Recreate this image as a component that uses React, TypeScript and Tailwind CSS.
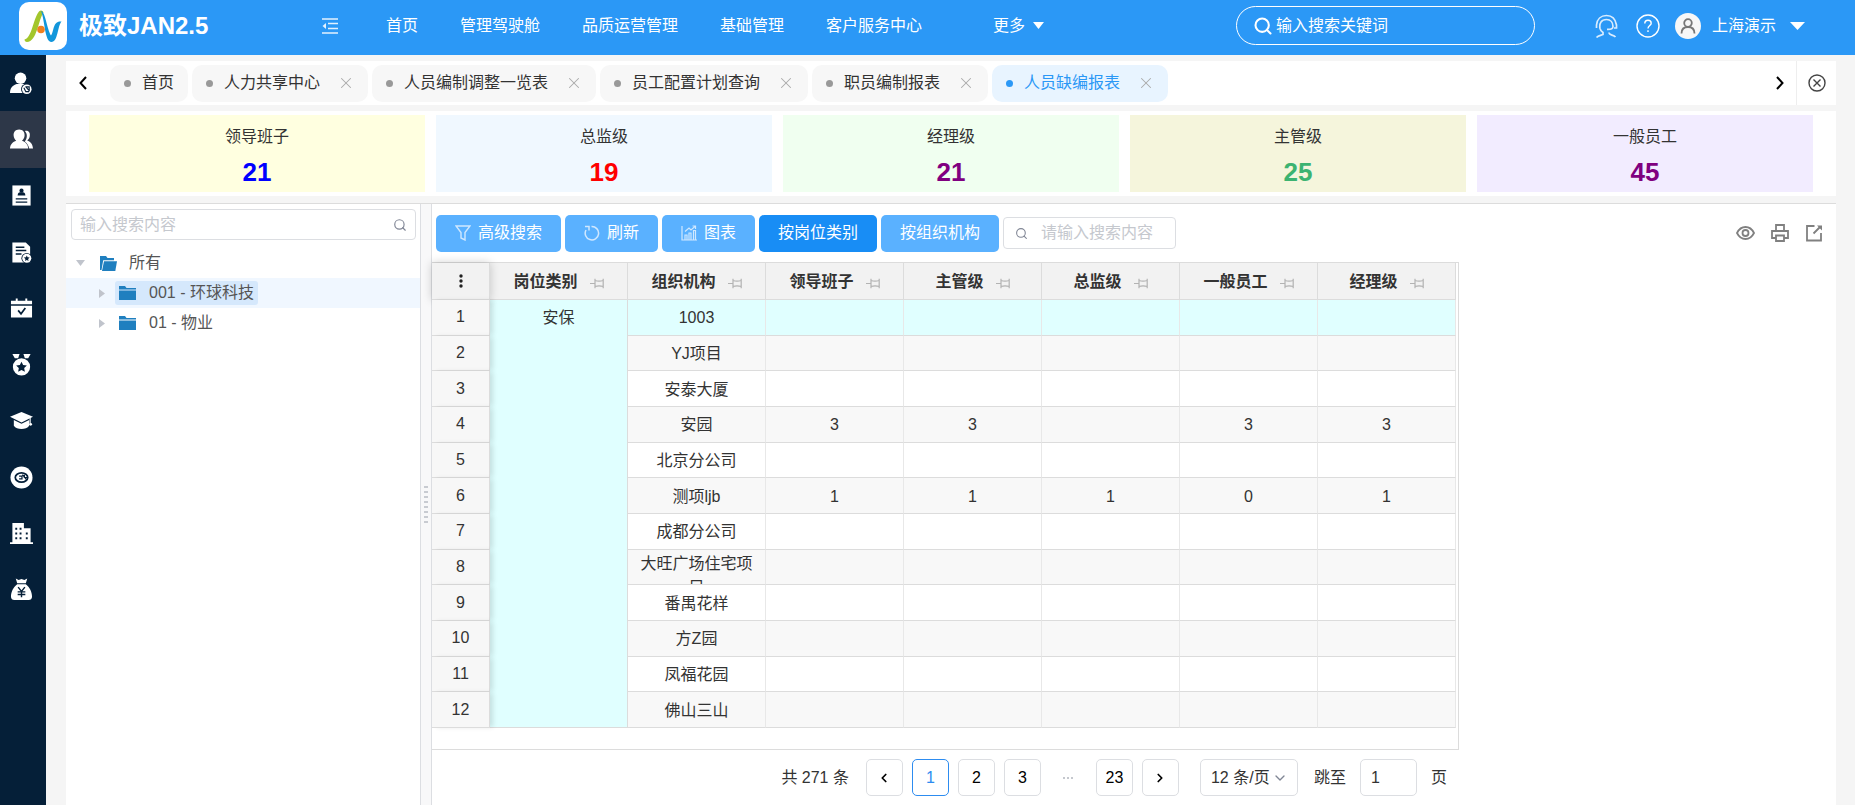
import type { ReactNode } from "react";
import clsx from "clsx";
import { ChevronDown, ChevronLeft, ChevronRight, Search, X } from "lucide-react";

const navItems = ["首页", "管理驾驶舱", "品质运营管理", "基础管理", "客户服务中心"];

const tabs = [
  { title: "首页", closable: false },
  { title: "人力共享中心", closable: true },
  { title: "人员编制调整一览表", closable: true },
  { title: "员工配置计划查询", closable: true },
  { title: "职员编制报表", closable: true },
  { title: "人员缺编报表", closable: true, active: true },
];

const summary = [
  { label: "领导班子", value: 21, bg: "bg-[#ffffe0]", color: "text-[#0000ff]" },
  { label: "总监级", value: 19, bg: "bg-[#f0f8ff]", color: "text-[#ff0000]" },
  { label: "经理级", value: 21, bg: "bg-[#f0fff0]", color: "text-[#800080]" },
  { label: "主管级", value: 25, bg: "bg-[#f5f5dc]", color: "text-[#3cb371]" },
  { label: "一般员工", value: 45, bg: "bg-[#f2ecff]", color: "text-[#800080]" },
];

const columns = ["岗位类别", "组织机构", "领导班子", "主管级", "总监级", "一般员工", "经理级"];

const rows: { org: string; values: string[] }[] = [
  { org: "1003", values: ["", "", "", "", ""] },
  { org: "YJ项目", values: ["", "", "", "", ""] },
  { org: "安泰大厦", values: ["", "", "", "", ""] },
  { org: "安园", values: ["3", "3", "", "3", "3"] },
  { org: "北京分公司", values: ["", "", "", "", ""] },
  { org: "测项ljb", values: ["1", "1", "1", "0", "1"] },
  { org: "成都分公司", values: ["", "", "", "", ""] },
  { org: "大旺广场住宅项目", values: ["", "", "", "", ""] },
  { org: "番禺花样", values: ["", "", "", "", ""] },
  { org: "方Z园", values: ["", "", "", "", ""] },
  { org: "凤福花园", values: ["", "", "", "", ""] },
  { org: "佛山三山", values: ["", "", "", "", ""] },
];

const dark = "#051f38";

const sideMenu: { name: string; icon: ReactNode }[] = [
  {
    name: "员工",
    icon: (
      <>
        <ellipse cx="11" cy="6.5" rx="6" ry="6" />
        <path d="M0 22c0-6 3-8 7-9.500h8l3 1.500v8z" />
        <circle cx="17.500" cy="18" r="6" fill={dark} />
        <circle cx="17.500" cy="18" r="5" />
        <path d="M14.500 16.500l2 4h3.500M16 15.500h4v4M17 16l3.500 4" stroke={dark} strokeWidth="1.200" fill="none" />
      </>
    ),
  },
  {
    name: "人员",
    icon: (
      <>
        <path d="M15.500 3c4-1 6 2 5 6-.4 2-1.500 3-2.500 4 3 1.200 5.500 3 6 8.500h-4c-.5-3-2-5.500-4.500-7.500 2.500-3.500 3-8 0-11z" />
        <path d="M9.500 1.500c4 0 6 3 5.700 6.500-.2 2.200-1.200 4-2.700 5.200 3.500 1.300 6.200 3.300 6.500 8.300H0c.3-5 3-7 6.500-8.300C5 12 4 10.200 3.800 8 3.500 4.500 5.500 1.500 9.500 1.500z" />
      </>
    ),
  },
  {
    name: "档案",
    icon: (
      <>
        <path d="M2.500 1.500h19v21h-19z" />
        <circle cx="12" cy="7" r="2.200" fill={dark} />
        <path d="M8 12c0-3 1.500-3.500 4-3.500s4 .5 4 3.500z" fill={dark} />
        <path d="M6 15.500h12M6 19h12" stroke={dark} strokeWidth="1.300" />
      </>
    ),
  },
  {
    name: "合同",
    icon: (
      <>
        <path d="M2.500 1.500h14l4.500 4.500v16.500H2.500z" />
        <path d="M6 6.500h9M6 10h11M6 13.500h6" stroke={dark} strokeWidth="1.600" />
        <circle cx="17.500" cy="18" r="5.600" fill={dark} />
        <circle cx="17.500" cy="18" r="4.700" />
        <path d="M17.500 15l.9 2 2.100.2-1.600 1.500.5 2.100-1.900-1.100-1.900 1.100.5-2.100-1.600-1.500 2.100-.2z" fill={dark} />
      </>
    ),
  },
  {
    name: "考勤",
    icon: (
      <>
        <path d="M1 4h5V1.500h2V4h8V1.500h2V4h5v3.500H1zM1 9h22v12.500H1z" />
        <path d="M8.500 14l3 3.500 4.500-6" stroke={dark} strokeWidth="1.800" fill="none" />
      </>
    ),
  },
  {
    name: "绩效",
    icon: (
      <>
        <path d="M2.500 1h7.500l-1.500 4.500H5zM14 1h7.500L19 5.500h-3.500z" />
        <circle cx="12" cy="14.500" r="9" />
        <path d="M12 9l1.700 3.500 3.900.5-2.800 2.700.7 3.900L12 17.800l-3.500 1.800.7-3.900L6.400 13l3.900-.5z" fill={dark} />
      </>
    ),
  },
  {
    name: "培训",
    icon: (
      <>
        <path d="M12 3l12 5-12 6L0 8z" />
        <path d="M4 11.500l8 4 8-4v6c-3 4.500-13 4.500-16 0z" />
        <path d="M21 9v6" stroke="#fff" strokeWidth="1.200" />
        <circle cx="21.500" cy="16" r="1.500" />
      </>
    ),
  },
  {
    name: "共享",
    icon: (
      <>
        <circle cx="12" cy="12" r="11.500" />
        <ellipse cx="12" cy="12" rx="6.500" ry="4.800" fill="none" stroke={dark} strokeWidth="1.800" />
        <path d="M9.500 10.500h3v3h-3M13 9l4 5M15 9v3h3" stroke={dark} strokeWidth="1.300" fill="none" />
      </>
    ),
  },
  {
    name: "组织",
    icon: (
      <>
        <path d="M2.500 1h12v5.500h7V21H24v2H0v-2h2.500z" />
        <path
          d="M5.500 6h2v2h-2zM10 6h2v2h-2zM5.500 11h2v2h-2zM10 11h2v2h-2zM16.500 11h2v2h-2zM5.500 16h2v2h-2zM10 16h2v2h-2zM16.500 16h2v2h-2z"
          fill={dark}
        />
      </>
    ),
  },
  {
    name: "薪酬",
    icon: (
      <>
        <path d="M6 .5l3 1.500 3-1 3 1 3-1.500-1.500 5h-9zM7.500 6.500h9c4 3 6.500 8 6.500 13 0 2-1.500 3.500-3.500 3.500h-15C2.500 23 1 21.500 1 19.500c0-5 2.500-10 6.500-13z" />
        <path d="M8.500 9.500l3.500 4.500 3.500-4.500M12 14v6M8 14.500h8M8 17.300h8" stroke={dark} strokeWidth="1.500" fill="none" />
      </>
    ),
  },
];

function Logo() {
  return (
    <span className="flex size-12 items-center justify-center rounded-[10px] bg-white">
      <svg width="40" height="40" viewBox="0 0 40 40">
        <path d="M1.500 33.500C9 32 10 13 16 5.500c1.500-1.800 4-1 4.500 1C15.500 13 14 36 4 36c-1.500 0-2.500-1-2.500-2.500z" fill="#a3c62c" />
        <path d="M18 5c4.500 1 6 18 10 24.500C31 26 29.500 14.500 38.500 15.500 34.500 20 35 36 28.500 36 21.500 36 22 14 18 5z" fill="#1296db" />
        <circle cx="18" cy="23.500" r="3.800" fill="#f08020" />
      </svg>
    </span>
  );
}

function Pin() {
  return (
    <svg width="14" height="11" viewBox="0 0 14 11" fill="none" stroke="#b3b3b3" strokeWidth="1.200">
      <path d="M0 5.500h5M5 .8v9.400M13.200.8v9.400M5 2.500c3 1 5 1 8.200 0M5 8.500c3-1 5-1 8.200 0" />
    </svg>
  );
}

function Folder({ open }: { open?: boolean }) {
  return (
    <svg width="17" height="15" viewBox="0 0 17 15" fill="#1f7fbf">
      {open ? (
        <>
          <path d="M0 0h6l1.500 2H14v2.200H3.200L1.500 14H0z" />
          <path d="M4 5.200h13L15.300 15H2z" />
        </>
      ) : (
        <>
          <path d="M0 0h6l1.500 2H17v1.500H0z" />
          <path d="M0 4.500h17V14H0z" />
        </>
      )}
    </svg>
  );
}

function ToolButton({ icon, active, children }: { icon?: ReactNode; active?: boolean; children: ReactNode }) {
  return (
    <button
      className={clsx(
        "flex h-[37px] items-center gap-[7px] rounded-[5px] px-[19px] text-white",
        active ? "bg-[#188df5]" : "bg-[#5ab1ff]"
      )}
    >
      {icon}
      {children}
    </button>
  );
}

function PageButton({ active, label, children }: { active?: boolean; label?: string; children: ReactNode }) {
  return (
    <button
      aria-label={label}
      className={clsx(
        "flex h-[37px] w-[37px] items-center justify-center rounded-[5px] border bg-white",
        active ? "border-[#2d8cf0] text-[#2d8cf0]" : "border-[#dcdee2] text-black"
      )}
    >
      {children}
    </button>
  );
}

function TopBar() {
  return (
    <header className="flex h-[55px] items-center bg-[#2b98f6] pr-[50px] pb-1 pl-[19px] text-white">
      <div className="flex w-[303px] items-center gap-3">
        <Logo />
        <h1 className="text-2xl font-bold">极致JAN2.5</h1>
      </div>
      <button aria-label="收起菜单">
        <svg width="16" height="16" viewBox="0 0 16 16" stroke="#e3f1fe" strokeWidth="1.400" fill="#e3f1fe">
          <path d="M0 1h16M6 5.500h10M6 10.500h10M0 15h16" fill="none" />
          <path d="M4 5v6L.5 8z" stroke="none" />
        </svg>
      </button>
      <nav className="ml-12 flex gap-[42px] whitespace-nowrap">
        {navItems.map((item) => (
          <a key={item} href="#">
            {item}
          </a>
        ))}
      </nav>
      <button className="ml-[71px] flex items-center gap-2 whitespace-nowrap">
        更多
        <svg width="11" height="7" viewBox="0 0 11 7" fill="currentColor">
          <path d="M0 0h11L5.500 7z" />
        </svg>
      </button>
      <label className="ml-auto flex h-[39px] w-[299px] items-center gap-[3px] rounded-full border border-white pl-4">
        <Search size={20} strokeWidth={2.5} />
        <input
          aria-label="搜索"
          placeholder="输入搜索关键词"
          className="min-w-0 flex-1 bg-transparent outline-none placeholder:text-white"
        />
      </label>
      <div className="ml-[60px] flex items-center">
        <button aria-label="客服">
          <svg width="24" height="24" viewBox="0 0 24 24" fill="none" stroke="#d9ecfe" strokeWidth="1.700">
            <path d="M1.500 14V11C2 5 6 1.500 11.500 1.500S20.500 5 21.500 11v3h-2.500" />
            <path d="M5 14.500C4 9 6.500 5.500 11.500 5.500c4 0 6.500 3 6.500 7 0 2-1.500 3-6 2.800M5 14.500c.5 2 1.500 3 3 4v2c-2 .8-5 1-6.500 3M14 18.500c0 3 4.500 2 6.500 4.500" />
          </svg>
        </button>
        <button aria-label="帮助" className="ml-[17px]">
          <svg width="24" height="24" viewBox="0 0 24 24" fill="none" stroke="#fff" strokeWidth="1.400">
            <circle cx="12" cy="12" r="11" />
            <path d="M8.800 9.500c0-2 1.300-3.300 3.200-3.300s3.200 1.200 3.200 3c0 2.300-3.200 2.500-3.200 5.300M12 16.300v1.700" />
          </svg>
        </button>
        <span className="ml-[15px] flex size-[26px] items-center justify-center rounded-full bg-[#f7f7f7]">
          <svg width="16" height="16" viewBox="0 0 16 16" fill="none" stroke="#777" strokeWidth="1.800">
            <circle cx="8" cy="5" r="3.800" />
            <path d="M1.500 15.500c0-4.500 2.500-6.500 6.500-6.500s6.500 2 6.500 6.500" />
          </svg>
        </span>
        <button className="ml-[11px] flex items-center gap-[14px] whitespace-nowrap">
          上海演示
          <svg width="15" height="8" viewBox="0 0 15 8" fill="currentColor">
            <path d="M0 0h15L7.500 8z" />
          </svg>
        </button>
      </div>
    </header>
  );
}

function TabBar() {
  return (
    <div className="flex h-11 items-center bg-white">
      <button aria-label="向左" className="flex w-11 justify-center pr-[10px] text-black">
        <svg width="8" height="14" viewBox="0 0 8 14" fill="none" stroke="currentColor" strokeWidth="2">
          <path d="M7 1L1.500 7 7 13" />
        </svg>
      </button>
      <div className="flex flex-1 gap-1 whitespace-nowrap">
        {tabs.map((tab) => (
          <div
            key={tab.title}
            className={clsx(
              "flex h-[37px] items-center rounded-[10px] pl-[14px]",
              tab.closable ? "pr-[13px]" : "pr-[14px]",
              tab.active ? "bg-[#e8f4ff] text-[#2b98f6]" : "bg-[#f7f7f7] text-[#333]"
            )}
          >
            <span className={clsx("mr-[11px] size-[7px] rounded-full", tab.active ? "bg-[#2b98f6]" : "bg-[#999]")} />
            <a href="#">{tab.title}</a>
            {tab.closable && (
              <button aria-label="关闭" className="ml-[17px] text-[#aaa]">
                <X size={18} strokeWidth={1.4} />
              </button>
            )}
          </div>
        ))}
      </div>
      <button aria-label="向右" className="flex w-[31px] justify-center pr-[2px] text-black">
        <svg width="8" height="14" viewBox="0 0 8 14" fill="none" stroke="currentColor" strokeWidth="2">
          <path d="M1 1l5.500 6L1 13" />
        </svg>
      </button>
      <button aria-label="全部关闭" className="flex h-full w-10 items-center justify-center border-l border-[#eee] text-[#444]">
        <svg width="18" height="18" viewBox="0 0 18 18" fill="none" stroke="currentColor" strokeWidth="1.400">
          <circle cx="9" cy="9" r="8" />
          <path d="M5.500 5.500l7 7M12.500 5.500l-7 7" />
        </svg>
      </button>
    </div>
  );
}

function OrgTree() {
  return (
    <aside className="w-[354px] shrink-0 pt-[5px]">
      <label className="mx-[5px] mr-1 flex h-[31px] items-center rounded-[4px] border border-[#dcdee2] pr-2 pl-2">
        <input
          aria-label="搜索组织"
          placeholder="输入搜索内容"
          className="min-w-0 flex-1 outline-none placeholder:text-[#c5c8ce]"
        />
        <Search size={14} strokeWidth={2} className="text-[#808695]" />
      </label>
      <ul className="mt-2 text-[#555]">
        <li className="flex h-[30px] items-center pl-[10px]">
          <svg width="9" height="6" viewBox="0 0 9 6" fill="#c0c4cc">
            <path d="M0 0h9L4.500 6z" />
          </svg>
          <span className="ml-[15px] flex items-center gap-3">
            <Folder open />
            所有
          </span>
        </li>
        {["001 - 环球科技", "01 - 物业"].map((name, i) => (
          <li key={name} className={clsx("flex h-[30px] items-center pl-[33px]", i === 0 && "bg-[#f0f7ff]")}>
            <svg width="6" height="9" viewBox="0 0 6 9" fill="#c0c4cc">
              <path d="M0 0v9l6-4.500z" />
            </svg>
            <span
              className={clsx(
                "ml-[10px] flex h-6 items-center gap-[13px] rounded-[3px] px-1",
                i === 0 && "bg-[#d5e8fc]"
              )}
            >
              <Folder />
              {name}
            </span>
          </li>
        ))}
      </ul>
    </aside>
  );
}

function Toolbar() {
  return (
    <div className="flex h-[58px] items-center pt-1 pl-1">
      <div className="flex items-center gap-1 pb-1 whitespace-nowrap">
        <ToolButton
          icon={
            <svg width="16" height="16" viewBox="0 0 16 16" fill="none" stroke="#d0e8ff" strokeWidth="1.400">
              <path d="M1 1h14l-5 6.500V15l-4-2V7.500z" />
            </svg>
          }
        >
          高级搜索
        </ToolButton>
        <ToolButton
          icon={
            <svg width="16" height="16" viewBox="0 0 16 16" fill="none" stroke="#d0e8ff" strokeWidth="1.500">
              <path d="M7.500 1.500A6.700 6.700 0 1 1 2 5M1 1.500h4v4" />
            </svg>
          }
        >
          刷新
        </ToolButton>
        <ToolButton
          icon={
            <svg width="16" height="16" viewBox="0 0 16 16" fill="none" stroke="#d0e8ff" strokeWidth="1.200">
              <path d="M1 1v14h15M4 15v-5h2v5M8 15V8h2v7M12.500 15V5.500h2V15M4 6.500l4-3.500 2 2L14.500 1M11.500 1h3v3" />
            </svg>
          }
        >
          图表
        </ToolButton>
        <ToolButton active>按岗位类别</ToolButton>
        <ToolButton>按组织机构</ToolButton>
        <label className="flex h-8 w-[173px] items-center gap-[13px] rounded-[4px] border border-[#dcdee2] pl-[11px]">
          <Search size={13} strokeWidth={2} className="shrink-0 text-[#808695]" />
          <input
            aria-label="搜索内容"
            placeholder="请输入搜索内容"
            className="w-0 flex-1 outline-none placeholder:text-[#c5c8ce]"
          />
        </label>
      </div>
      <div className="mr-[13px] ml-auto flex items-center gap-4 pb-1 text-[#808080]">
        <button aria-label="显示">
          <svg width="19" height="18" viewBox="0 0 19 18" fill="none" stroke="currentColor" strokeWidth="1.800">
            <path d="M1 9c2-4 5-6 8.500-6S16 5 18 9c-2 4-5 6-8.500 6S3 13 1 9z" />
            <circle cx="9.500" cy="9" r="3" />
          </svg>
        </button>
        <button aria-label="打印">
          <svg width="18" height="18" viewBox="0 0 18 18" fill="none" stroke="currentColor" strokeWidth="1.800">
            <path d="M5 7V1h8v6M5 14H1V7h16v7h-4M5 11.500h8V17H5z" />
          </svg>
        </button>
        <button aria-label="导出">
          <svg width="18" height="18" viewBox="0 0 18 18" fill="none" stroke="currentColor" strokeWidth="1.800">
            <path d="M9.500 2H2v14.500h14V9M8.500 9.500L15 3" />
            <path d="M12 1.500h5v5z" fill="currentColor" stroke="none" />
          </svg>
        </button>
      </div>
    </div>
  );
}

function ReportTable() {
  return (
    <div className="w-[1027px] border-t border-r border-b border-[#dcdcdc] pb-[21px]">
      <table className="h-[465px] w-[1024px] table-fixed border-separate border-spacing-0 text-center text-[#333]">
        <thead>
          <tr className="h-[37px] bg-[#f2f2f2]">
            <th className="relative z-10 w-[58px] border-r border-b border-[#dcdcdc] bg-[#f2f2f2] shadow-[0_0_9px_rgba(0,0,0,0.2)]">
              <svg width="4" height="14" viewBox="0 0 4 14" fill="#222" className="mx-auto">
                <circle cx="2" cy="2" r="1.700" />
                <circle cx="2" cy="7" r="1.700" />
                <circle cx="2" cy="12" r="1.700" />
              </svg>
            </th>
            {columns.map((name) => (
              <th key={name} className="border-r border-b border-[#dcdcdc] pt-[2px]">
                <span className="flex items-center justify-center gap-3">
                  {name}
                  <button aria-label="固定列" className="pt-[2px]">
                    <Pin />
                  </button>
                </span>
              </th>
            ))}
          </tr>
        </thead>
        <tbody>
          {rows.map((row, i) => (
            <tr
              key={row.org}
              className={clsx("h-[35px]", i === 0 ? "bg-[#e0ffff]" : i % 2 === 1 ? "bg-[#f8f8f8]" : "bg-white")}
            >
              <td className="relative z-10 border-r border-b border-[#dcdcdc] bg-[#f7f7f7] shadow-[4px_0_5px_-1px_rgba(0,0,0,0.12)]">
                {i + 1}
              </td>
              {i === 0 && (
                <td rowSpan={12} className="border-r border-b border-[#dcdcdc] bg-[#e0ffff] pt-[6px] align-top">
                  安保
                </td>
              )}
              <td className="border-r border-b border-r-[#e8e8e8] border-b-[#dcdcdc] px-2 pt-[2px]">
                <div className={clsx("overflow-hidden", row.org.length > 7 && "h-8")}>{row.org}</div>
              </td>
              {row.values.map((value, j) => (
                <td key={j} className="border-r border-b border-r-[#e8e8e8] border-b-[#dcdcdc] pt-[2px]">
                  {value}
                </td>
              ))}
            </tr>
          ))}
        </tbody>
      </table>
    </div>
  );
}

function Pagination() {
  return (
    <div className="flex w-[1027px] items-center justify-end gap-[9px] py-[9px] pr-3 whitespace-nowrap text-[#333]">
      <span className="mr-2">共 271 条</span>
      <PageButton label="上一页">
        <ChevronLeft size={14} strokeWidth={3} />
      </PageButton>
      <PageButton active>1</PageButton>
      <PageButton>2</PageButton>
      <PageButton>3</PageButton>
      <span className="flex w-[37px] justify-center gap-[2px]">
        <i className="size-[2px] bg-[#c5c8ce]" />
        <i className="size-[2px] bg-[#c5c8ce]" />
        <i className="size-[2px] bg-[#c5c8ce]" />
      </span>
      <PageButton>23</PageButton>
      <PageButton label="下一页">
        <ChevronRight size={14} strokeWidth={3} />
      </PageButton>
      <span className="relative ml-3">
        <select
          aria-label="每页条数"
          className="h-[37px] w-[98px] appearance-none rounded-[5px] border border-[#dcdee2] bg-white pl-[10px]"
        >
          <option>12 条/页</option>
        </select>
        <ChevronDown size={16} strokeWidth={2} className="pointer-events-none absolute top-[11px] right-[10px] text-[#808695]" />
      </span>
      <label className="ml-[7px] flex items-center gap-[14px]">
        跳至
        <input defaultValue="1" className="h-[37px] w-[57px] rounded-[5px] border border-[#dcdee2] pl-[10px]" />
        页
      </label>
    </div>
  );
}

export default function App() {
  return (
    <div className="flex min-h-screen flex-col bg-[#f5f5f5] font-['Liberation_Sans','Noto_Sans_CJK_SC',sans-serif] text-base">
      <TopBar />
      <div className="flex flex-1">
        {/* Icon menu */}
        <nav className="w-[46px] shrink-0 bg-[#051f38]">
          <div className="flex h-[563px] flex-col">
            {sideMenu.map((item, i) => (
              <a
                key={item.name}
                href="#"
                aria-label={item.name}
                className={clsx("flex flex-1 items-center pl-[10px]", i === 1 && "bg-[#2d3748]")}
              >
                <svg width="23" height="23" viewBox="0 0 24 24" fill="#fff">
                  {item.icon}
                </svg>
              </a>
            ))}
          </div>
        </nav>

        <main className="mr-[19px] ml-5 flex min-w-0 flex-1 flex-col pt-[6px]">
          <TabBar />

          {/* Summary cards */}
          <section className="mt-[6px] grid grid-cols-5 gap-[11px] bg-white px-[23px] py-1 text-center">
            {summary.map((card) => (
              <div key={card.label} className={clsx("flex h-[77px] flex-col items-center pt-[10px]", card.bg)}>
                <div className="text-[#333]">{card.label}</div>
                <div className={clsx("text-[26px] leading-[46px] font-bold", card.color)}>{card.value}</div>
              </div>
            ))}
          </section>

          <section className="mt-[7px] flex flex-1 border-t border-[#dcdcdc] bg-white">
            <OrgTree />
            {/* Splitter */}
            <div className="flex w-3 shrink-0 flex-col items-center justify-center gap-[3px] border-r border-l border-[#dcdee2] bg-[#f8f8f9]">
              {Array.from({ length: 8 }, (_, i) => (
                <i key={i} className="h-[2px] w-1 bg-[#c8cbd1]" />
              ))}
            </div>
            <div className="min-w-0 flex-1">
              <Toolbar />
              <ReportTable />
              <Pagination />
            </div>
          </section>
        </main>
      </div>
    </div>
  );
}
